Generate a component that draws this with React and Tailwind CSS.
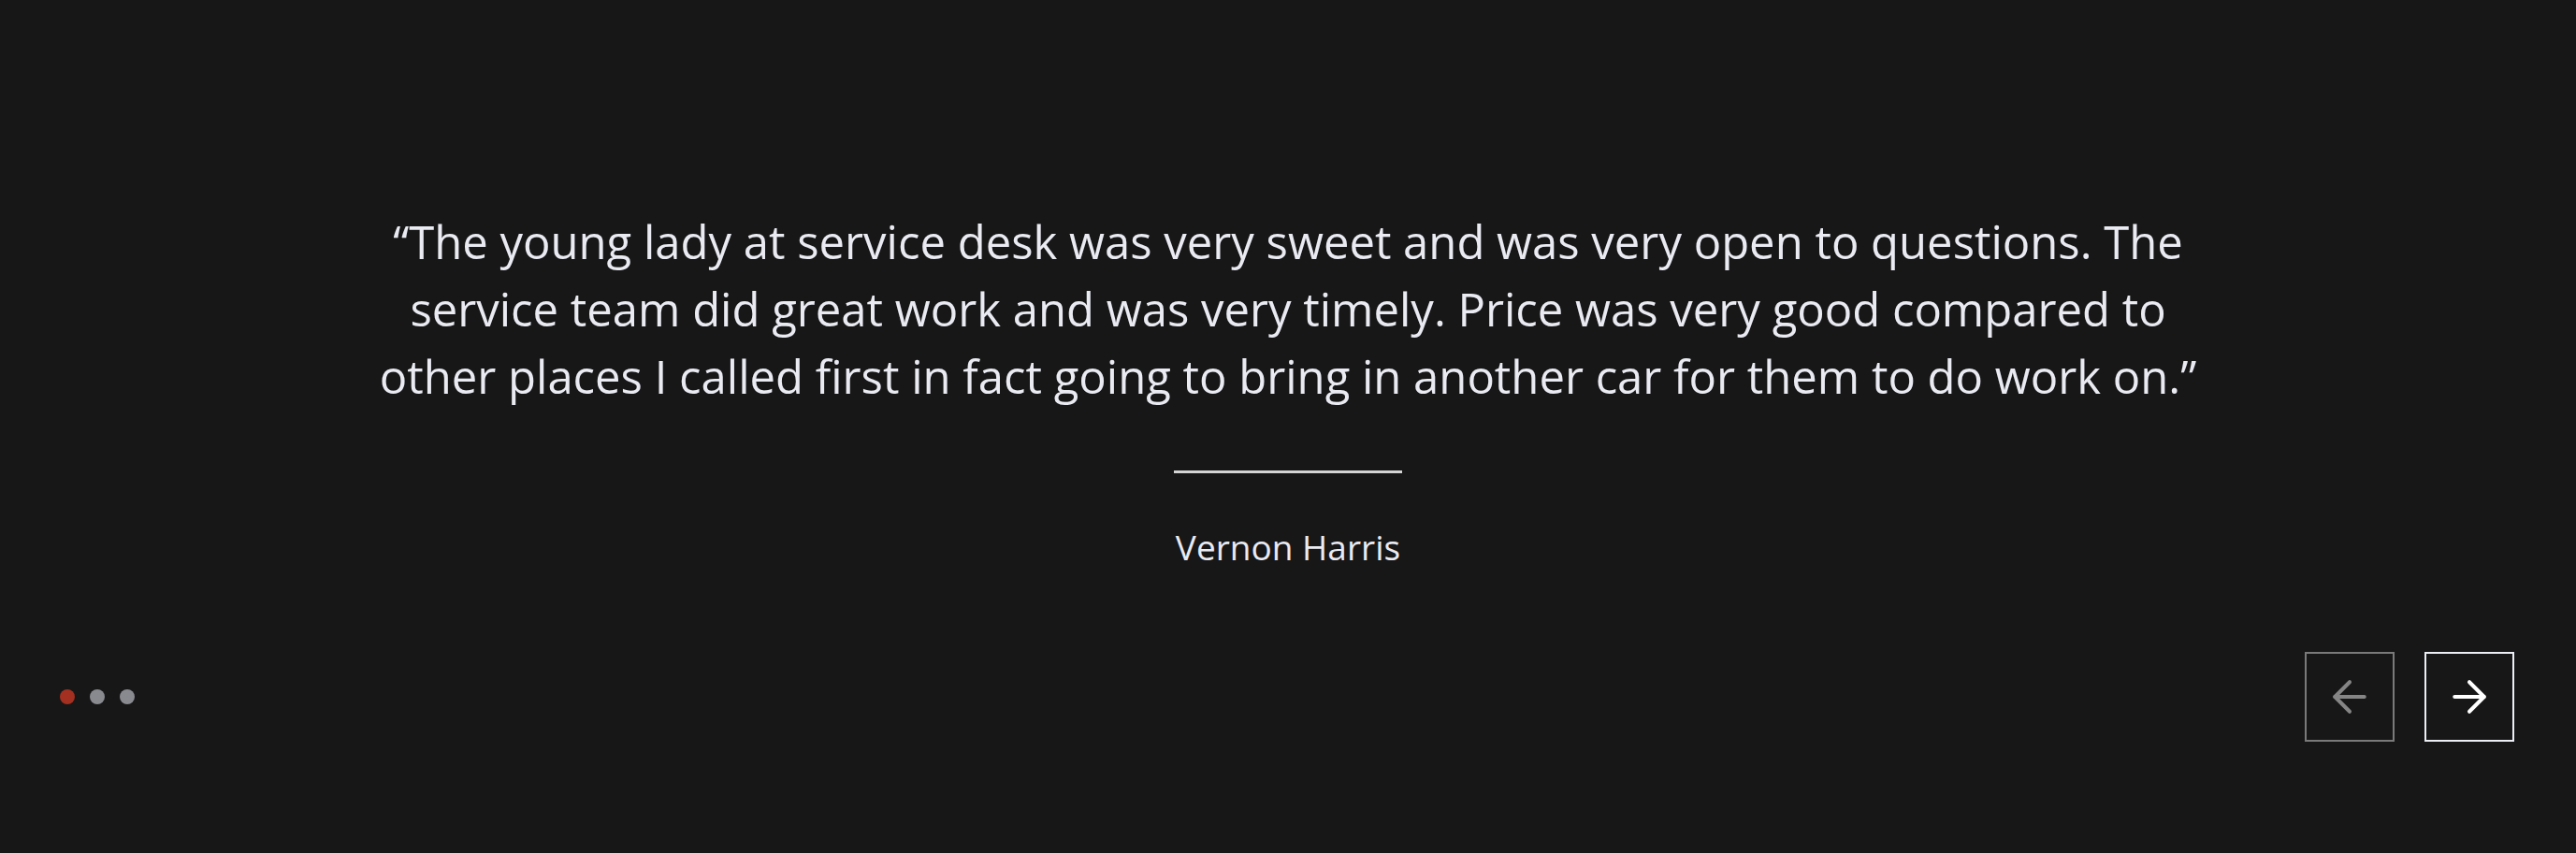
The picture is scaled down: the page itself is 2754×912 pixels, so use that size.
import { ArrowLeft, ArrowRight } from "lucide-react";

const quote =
  "\u201CThe young lady at service desk was very sweet and was very open to questions. The service team did great work and was very timely. Price was very good compared to other places I called first in fact going to bring in another car for them to do work on.\u201D";

const Testimonial = () => {
  return (
    <section
      className="w-full h-[912px] bg-[#171717] flex flex-col pt-[222px]"
      style={{ fontFamily: '"Open Sans", "Liberation Sans", sans-serif' }}
    >
      <p className="max-w-[1960px] mx-auto text-center text-[49px] leading-[72px] text-[#e9eaf2]">
        {quote}
      </p>
      <div className="mx-auto mt-[65px] w-[244px] h-[3px] bg-[#d4d4d4]" />
      <div className="mt-[52px] text-center text-[37px] leading-[54px] text-[#e9eaf2]">
        Vernon Harris
      </div>
      <div className="mt-[85px] flex items-center justify-between pl-[64px] pr-[66px]">
        <div className="flex items-center gap-4">
          <span className="w-4 h-4 rounded-full bg-[#a33020]" />
          <span className="w-4 h-4 rounded-full bg-[#898a90]" />
          <span className="w-4 h-4 rounded-full bg-[#898a90]" />
        </div>
        <div className="flex items-center gap-8">
          <button className="w-24 h-24 border-2 border-[#7a7a7a] flex items-center justify-center text-[#858585]">
            <ArrowLeft size={54} strokeWidth={1.8} />
          </button>
          <button className="w-24 h-24 border-2 border-[#eceef5] flex items-center justify-center text-white">
            <ArrowRight size={54} strokeWidth={1.8} />
          </button>
        </div>
      </div>
    </section>
  );
};

export default function App() {
  return <Testimonial />;
}
